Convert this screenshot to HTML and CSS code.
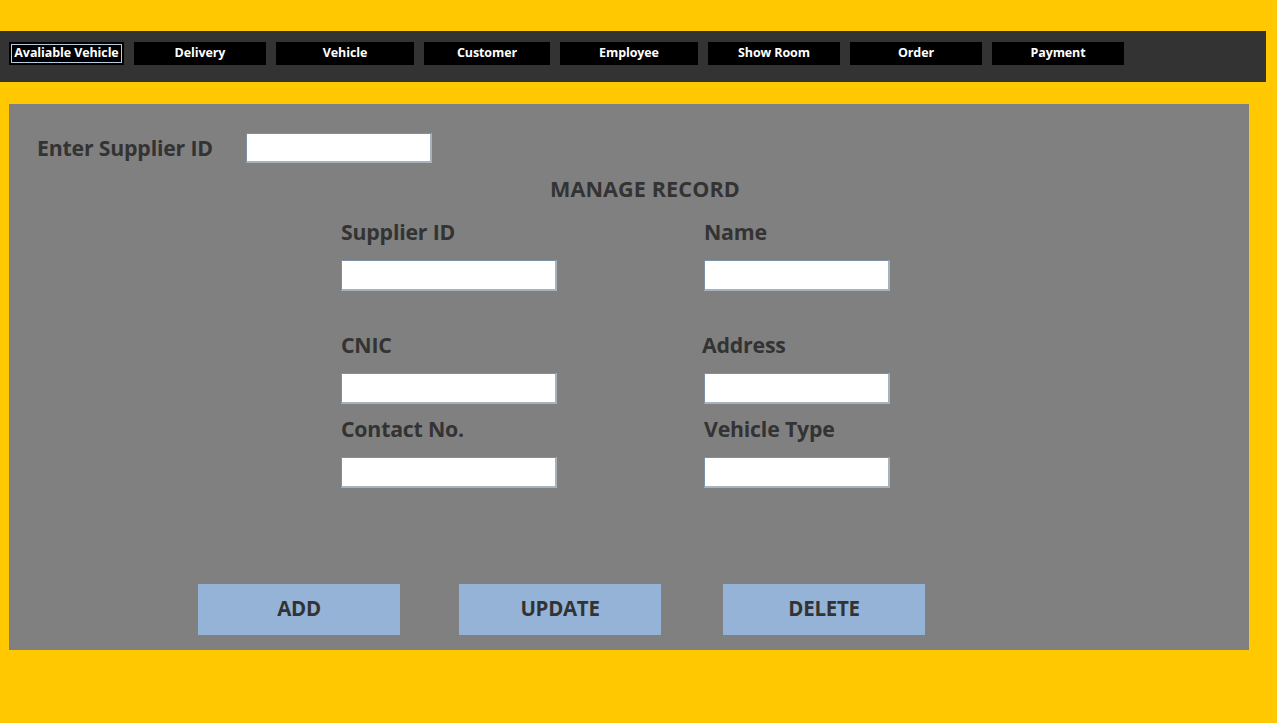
FILE: index.html
```html
<!DOCTYPE html>
<html lang="en">
<head>
<meta charset="utf-8">
<title>Manage Supplier Record</title>
<link rel="stylesheet" href="styles.css">
</head>
<body>
<nav class="topbar">
  <a class="nav-btn nav-active w115">Avaliable Vehicle</a>
  <a class="nav-btn w132">Delivery</a>
  <a class="nav-btn w138">Vehicle</a>
  <a class="nav-btn w126">Customer</a>
  <a class="nav-btn w138">Employee</a>
  <a class="nav-btn w132">Show Room</a>
  <a class="nav-btn w132">Order</a>
  <a class="nav-btn w132">Payment</a>
</nav>
<main class="panel">
  <div class="search-row">
    <label class="label search-label">Enter Supplier ID</label>
    <input class="field field-search" type="text">
  </div>
  <h1 class="title">MANAGE RECORD</h1>
  <div class="form-grid">
    <div class="cell">
      <label class="label">Supplier ID</label>
      <input class="field field-wide" type="text">
    </div>
    <div class="cell">
      <label class="label">Name</label>
      <input class="field field-narrow" type="text">
    </div>
    <div class="cell row2">
      <label class="label">CNIC</label>
      <input class="field field-wide" type="text">
    </div>
    <div class="cell row2">
      <label class="label label-shift">Address</label>
      <input class="field field-narrow" type="text">
    </div>
    <div class="cell row3">
      <label class="label">Contact No.</label>
      <input class="field field-wide" type="text">
    </div>
    <div class="cell row3">
      <label class="label">Vehicle Type</label>
      <input class="field field-narrow" type="text">
    </div>
  </div>
  <div class="actions">
    <button class="action">ADD</button>
    <button class="action">UPDATE</button>
    <button class="action action-last">DELETE</button>
  </div>
</main>
</body>
</html>
```
FILE: styles.css
```css
* { box-sizing: border-box; }

html, body {
  margin: 0;
  padding: 0;
  background: #ffc800;
  width: 1277px;
  height: 723px;
  overflow: hidden;
  font-family: "Open Sans", "Noto Sans", sans-serif;
}

.topbar {
  margin-top: 31px;
  width: 1266px;
  height: 51px;
  background: #333333;
  display: flex;
  gap: 10px;
  padding: 11px 0 0 9px;
}

.nav-btn {
  display: flex;
  align-items: center;
  justify-content: center;
  height: 23px;
  background: #000;
  color: #fff;
  font-weight: 700;
  font-size: 12.5px;
  letter-spacing: -0.1px;
  white-space: nowrap;
  cursor: pointer;
  padding-bottom: 2px;
}

.nav-active {
  border: 2px solid #000;
  outline: 1px solid #b8cce4;
  outline-offset: -3px;
}

.w115 { width: 115px; }
.w126 { width: 126px; }
.w132 { width: 132px; }
.w138 { width: 138px; }

.panel {
  margin: 22px 0 0 9px;
  width: 1240px;
  height: 546px;
  background: #808080;
  padding: 29px 0 0 0;
  color: #333333;
}

.label {
  display: block;
  font-size: 21.3px;
  line-height: 24px;
  font-weight: 700;
  color: #333333;
  letter-spacing: -0.2px;
}

.search-row {
  display: flex;
  align-items: center;
  height: 30px;
  padding-left: 28px;
}

.search-label { width: 209px; }

.field {
  display: block;
  height: 31px;
  background: #fff;
  border-style: solid;
  border-width: 1px 2px 2px 1px;
  border-color: #7d91a6 #a6b2be #a6b2be #7d91a6;
  box-shadow: inset -1px -1px 0 #ffffff;
  padding: 0 4px;
  font: inherit;
  font-size: 15px;
}

.field-search { width: 186px; height: 30px; }
.field-wide { width: 216px; }
.field-narrow { width: 186px; }

.title {
  margin: 14px 0 0 541px;
  font-size: 21.6px;
  line-height: 24px;
  font-weight: 700;
  color: #333333;
  letter-spacing: 0.1px;
}

.form-grid {
  margin: 19px 0 0 332px;
  display: grid;
  grid-template-columns: 363px 186px;
}

.cell .label { margin-bottom: 16px; }

.row2 { margin-top: 42px; }
.row3 { margin-top: 13px; }

.label-shift { margin-left: -2px; }

.actions {
  margin: 96px 0 0 189px;
  display: flex;
  gap: 59px;
}

.action {
  width: 202px;
  height: 51px;
  background: #95b3d7;
  border: none;
  color: #333333;
  font-family: inherit;
  font-weight: 700;
  font-size: 20.5px;
  letter-spacing: -0.3px;
  cursor: pointer;
  padding: 0 0 3px 0;
}

.action-last { margin-left: 3px; }
```
